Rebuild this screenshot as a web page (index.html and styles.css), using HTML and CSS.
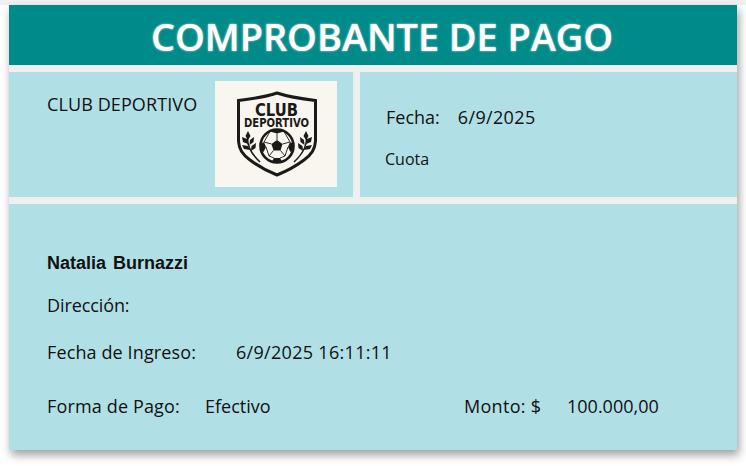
FILE: index.html
```html
<!DOCTYPE html>
<html lang="es">
<head>
<meta charset="utf-8">
<title>Comprobante de pago</title>
<link rel="stylesheet" href="styles.css">
</head>
<body>
<main class="card">
  <h1 class="title">COMPROBANTE DE PAGO</h1>
  <div class="top">
    <section class="panel club">
      <p class="club-name">CLUB DEPORTIVO</p>
      <div class="logo">
        <svg width="122" height="106" viewBox="0 0 122 106" aria-label="Club Deportivo">
          <path class="shield" d="M62 12 C50 16 36 18 23.500 19.500 L23.500 60 C24 68 27 73 35 79 C43 85 52 90 62 94 C72 90 81 85 89 79 C97 73 100 68 100.500 60 L100.500 19.500 C88 18 74 16 62 12Z"/>
          <text class="logo-a" x="61.500" y="35" text-anchor="middle" textLength="43" lengthAdjust="spacingAndGlyphs">CLUB</text>
          <text class="logo-b" x="61.500" y="46" text-anchor="middle" textLength="65" lengthAdjust="spacingAndGlyphs">DEPORTIVO</text>
          <circle class="ball" cx="62" cy="65" r="16.500"/>
          <path class="patch" d="M62 59 L67.500 63 L65.500 69.500 L58.500 69.500 L56.500 63Z M55 50.500 L62 52.500 L69 50.500 L66 48.500 L58 48.500Z M45.500 63 L49 61 L51 66 L48.500 71 L47 70Z M78.500 63 L75 61 L73 66 L75.500 71 L77 70Z M57 80.500 L59 77 L65 77 L67 80.500 L62 81.500Z"/>
          <path class="spokes" d="M62 52.500V59M56.500 63L49 61M67.500 63L75 61M58.500 69.500L54 75M65.500 69.500L70 75M51 66L54 75L59 77M73 66L70 75L65 77M55 50.500L49 61M69 50.500L75 61"/>
          <path class="stem" d="M33 52 C31 62 34 71 45 81"/>
          <path class="leaf" d="M33 50 L30.500 55 L33 59 L35.500 55Z M27 56 L28 61 L33 63 L32 58Z M39 56 L35 59 L34.500 64 L38.500 61Z M27 64 L29 68 L35 69 L33 65Z M41 62 L36.500 65 L36 70 L40.500 67Z"/>
          <path class="stem" d="M91 52 C93 62 90 71 79 81"/>
          <path class="leaf" d="M91 50 L93.500 55 L91 59 L88.500 55Z M97 56 L96 61 L91 63 L92 58Z M85 56 L89 59 L89.500 64 L85.500 61Z M97 64 L95 68 L89 69 L91 65Z M83 62 L87.500 65 L88 70 L83.500 67Z"/>
        </svg>
      </div>
    </section>
    <section class="panel info">
      <p class="date"><span>Fecha:</span><span class="date-value">6/9/2025</span></p>
      <p class="kind">Cuota</p>
    </section>
  </div>
  <section class="panel detail">
    <p class="name">Natalia Burnazzi</p>
    <p class="row address">Dirección:</p>
    <p class="row entry"><span class="entry-label">Fecha de Ingreso:</span><span class="num">6/9/2025 16:11:11</span></p>
    <div class="row pay">
      <p class="pay-method"><span class="pay-label">Forma de Pago:</span><span>Efectivo</span></p>
      <p class="pay-amount"><span class="amount-label">Monto: $</span><span>100.000,00</span></p>
    </div>
  </section>
</main>
</body>
</html>
```

FILE: styles.css
```css
* { box-sizing: border-box; }
html, body { margin: 0; height: 100%; }
body {
  width: 746px;
  height: 466px;
  background: #fff;
  padding: 5px 9px 0;
  overflow: hidden;
  position: relative;
  font-family: "Open Sans", "Noto Sans", sans-serif;
  color: #111;
}
body::before {
  content: "";
  position: absolute;
  left: 0;
  right: 0;
  top: 0;
  height: 5px;
  background: #f0f0f0;
}
p, h1 { margin: 0; }
.card {
  width: 728px;
  height: 445px;
  background: #eef0f0;
  display: flex;
  flex-direction: column;
  gap: 7px;
  box-shadow: 2px 5px 9px rgba(0, 0, 0, .38);
  position: relative;
}
.title {
  height: 60px;
  padding-left: 18px;
  background: #008b8b;
  color: #fff;
  font-size: 38px;
  font-weight: 600;
  line-height: 62px;
  text-align: center;
  letter-spacing: -.1px;
  text-shadow: 0 0 2px #eee6d8;
}
.top {
  display: grid;
  grid-template-columns: 344px 377px;
  gap: 7px;
  height: 125px;
}
.panel { background: #b0dfe6; }
.club {
  display: flex;
  padding: 9px 0 0 38px;
}
.club-name {
  width: 168px;
  height: 28px;
  margin-top: 9px;
  font-size: 18px;
  line-height: 28px;
  letter-spacing: .1px;
  white-space: nowrap;
}
.logo {
  width: 122px;
  height: 106px;
  background: #f9f5ef;
}
.logo svg { display: block; }
.shield { fill: #f9f5ef; stroke: #1a1a18; stroke-width: 3; stroke-linejoin: miter; }
.logo-a, .logo-b {
  font-family: "DejaVu Sans", sans-serif;
  font-weight: 700;
  fill: #1a1a18;
}
.logo-a { font-size: 18px; }
.logo-b { font-size: 12.5px; }
.ball { fill: #f9f5ef; stroke: #1a1a18; stroke-width: 2.6; }
.patch { fill: #1a1a18; }
.spokes { stroke: #1a1a18; stroke-width: .9; fill: none; }
.stem { stroke: #1a1a18; stroke-width: 1.5; fill: none; }
.leaf { fill: #1a1a18; }
.info { padding: 31px 0 0 26px; }
.date {
  display: flex;
  gap: 18px;
  font-size: 18px;
  line-height: 28px;
}
.date-value { letter-spacing: .35px; }
.kind {
  margin: 18px 0 0 -1px;
  font-size: 16px;
  line-height: 20px;
}
.detail {
  flex: 1;
  padding: 47px 0 0 38px;
}
.name {
  font-family: "Liberation Sans", sans-serif;
  font-weight: 700;
  font-size: 18px;
  line-height: 24px;
  word-spacing: 2px;
}
.row {
  font-size: 18px;
  line-height: 26px;
}
.num { letter-spacing: .3px; }
.address { margin-top: 17px; letter-spacing: -.1px; }
.entry { display: flex; margin-top: 21px; }
.entry-label { width: 189px; letter-spacing: .12px; }
.pay { display: flex; margin-top: 28px; }
.pay-method { display: flex; width: 417px; }
.pay-label { width: 158px; letter-spacing: .15px; }
.pay-amount { display: flex; }
.amount-label { width: 103px; letter-spacing: .3px; }
```
